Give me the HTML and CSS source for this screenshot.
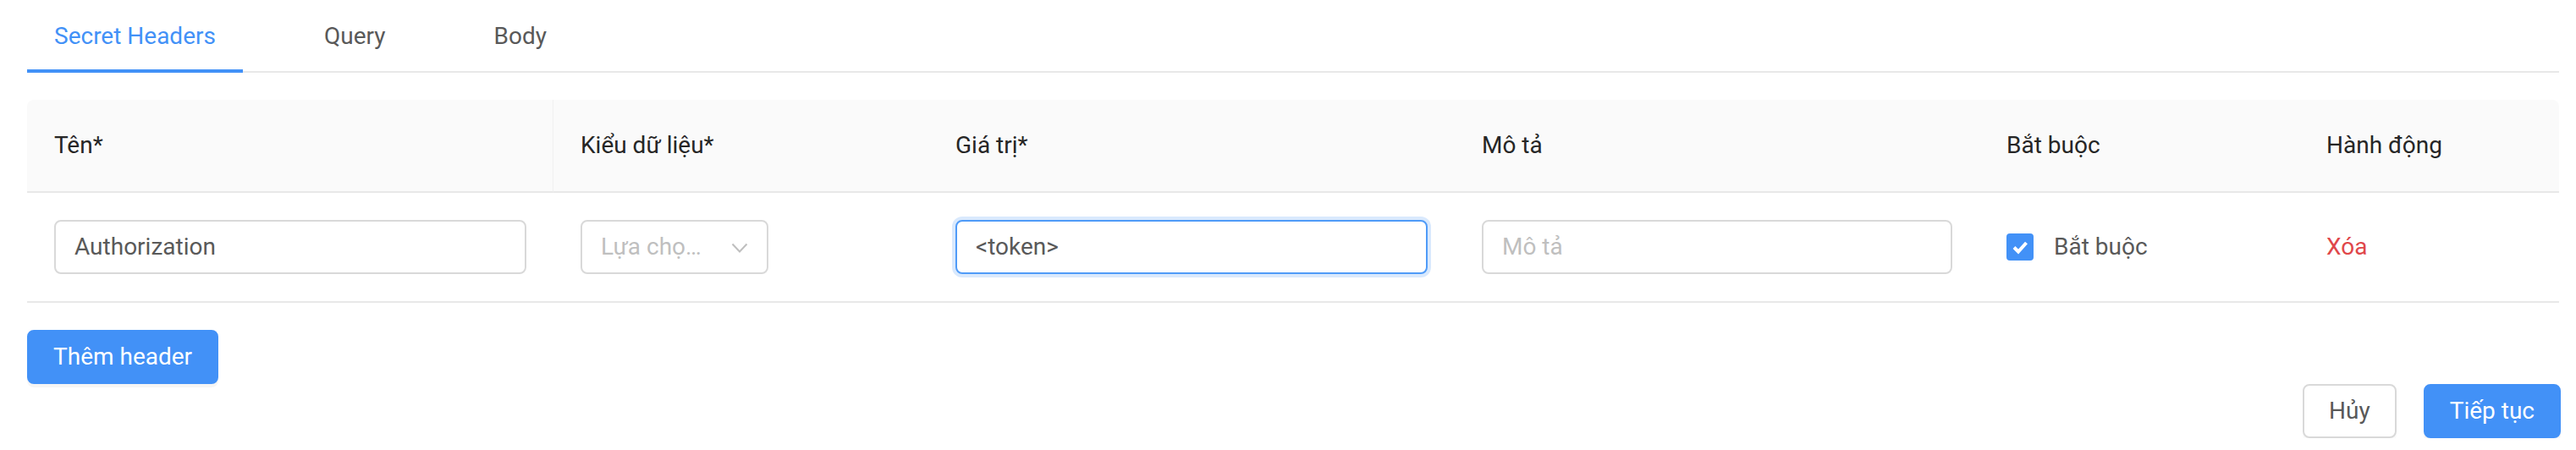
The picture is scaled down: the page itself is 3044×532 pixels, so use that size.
FILE: index.html
```html
<!DOCTYPE html>
<html lang="vi">
<head>
<meta charset="utf-8">
<title>Secret Headers</title>
<link rel="stylesheet" href="styles.css">
</head>
<body>
<div class="page">
  <nav class="tabs">
    <div class="tab active">Secret Headers</div>
    <div class="tab">Query</div>
    <div class="tab">Body</div>
  </nav>

  <div class="table">
    <div class="row head">
      <div class="cell sep">Tên*</div>
      <div class="cell">Kiểu dữ liệu*</div>
      <div class="cell">Giá trị*</div>
      <div class="cell">Mô tả</div>
      <div class="cell">Bắt buộc</div>
      <div class="cell">Hành động</div>
    </div>
    <div class="row body">
      <div class="cell"><div class="input">Authorization</div></div>
      <div class="cell">
        <div class="select">
          <span class="placeholder">Lựa chọ…</span>
          <svg class="arrow" width="20" height="14" viewBox="0 0 20 14"><path d="M1.5 2.5 L10 11.5 L18.5 2.5" fill="none" stroke="#bfbfbf" stroke-width="2"/></svg>
        </div>
      </div>
      <div class="cell"><div class="input focus">&lt;token&gt;</div></div>
      <div class="cell"><div class="input"><span class="placeholder">Mô tả</span></div></div>
      <div class="cell">
        <label class="check">
          <span class="box"><svg width="32" height="32" viewBox="0 0 32 32"><path d="M9 16.5 L14 21.5 L23.5 11" fill="none" stroke="#fff" stroke-width="4"/></svg></span>
          <span>Bắt buộc</span>
        </label>
      </div>
      <div class="cell"><span class="danger">Xóa</span></div>
    </div>
  </div>

  <div class="add-row">
    <button class="btn primary">Thêm header</button>
  </div>

  <div class="footer">
    <button class="btn default">Hủy</button>
    <button class="btn primary">Tiếp tục</button>
  </div>
</div>
</body>
</html>
```

FILE: styles.css
```css
* { box-sizing: border-box; }

html, body {
  margin: 0;
  padding: 0;
  background: #fff;
}

body {
  font-family: Roboto, "Noto Sans", "Liberation Sans", sans-serif;
  font-size: 28px;
  line-height: 42px;
  color: #595959;
}

.page {
  padding: 0 20px 0 32px;
}

/* Tabs */
.tabs {
  display: flex;
  border-bottom: 2px solid #e8e8e8;
  margin-bottom: 32px;
}

.tab {
  position: relative;
  padding: 22px 32px 20px;
  margin-right: 64px;
  color: #595959;
}

.tab.active {
  color: #4291f7;
}

.tab.active::after {
  content: "";
  position: absolute;
  left: 0;
  right: 0;
  bottom: -2px;
  height: 4px;
  background: #4291f7;
}

/* Table */
.table {
  display: grid;
  grid-template-columns: 622px 443px 622px 620px 378px 1fr;
}

.row {
  display: contents;
}

.head .cell {
  background: #fafafa;
  color: #262626;
  padding: 33px 32px;
  border-bottom: 2px solid #e8e8e8;
}

.head .cell:first-child {
  border-top-left-radius: 8px;
}

.head .cell:last-child {
  border-top-right-radius: 8px;
}

.head .cell.sep {
  border-right: 1px solid #f0f0f0;
}

.body .cell {
  padding: 32px;
  border-bottom: 2px solid #e8e8e8;
  display: flex;
  align-items: center;
}

.input {
  width: 100%;
  height: 64px;
  border: 2px solid #d9d9d9;
  border-radius: 8px;
  padding: 0 22px;
  display: flex;
  align-items: center;
  color: #595959;
  background: #fff;
}

.input.focus {
  border-color: #4f9bf8;
  box-shadow: 0 0 0 4px rgba(66, 145, 247, 0.2);
}

.placeholder {
  color: #bfbfbf;
}

.select {
  width: 222px;
  height: 64px;
  border: 2px solid #d9d9d9;
  border-radius: 8px;
  padding: 0 22px;
  display: flex;
  align-items: center;
  justify-content: space-between;
}

.arrow {
  flex: none;
  margin-top: 2px;
}

.check {
  display: flex;
  align-items: center;
  gap: 24px;
  color: #595959;
}

.box {
  width: 32px;
  height: 32px;
  border-radius: 4px;
  background: #4291f7;
  display: flex;
}

.danger {
  color: #e0474a;
}

/* Buttons */
.add-row {
  margin-top: 32px;
  display: flex;
}

.btn {
  font-family: inherit;
  font-size: 28px;
  line-height: 42px;
  height: 64px;
  padding: 0 29px;
  border-radius: 8px;
  cursor: pointer;
}

.btn.primary {
  background: #4291f7;
  border: 2px solid #4291f7;
  color: #fff;
  box-shadow: 0 4px 0 rgba(0, 0, 0, 0.04);
}

.btn.default {
  background: #fff;
  border: 2px solid #d9d9d9;
  color: #595959;
  box-shadow: 0 4px 0 rgba(0, 0, 0, 0.02);
}

.footer {
  display: flex;
  justify-content: flex-end;
  gap: 32px;
  margin-right: -2px;
}
```
